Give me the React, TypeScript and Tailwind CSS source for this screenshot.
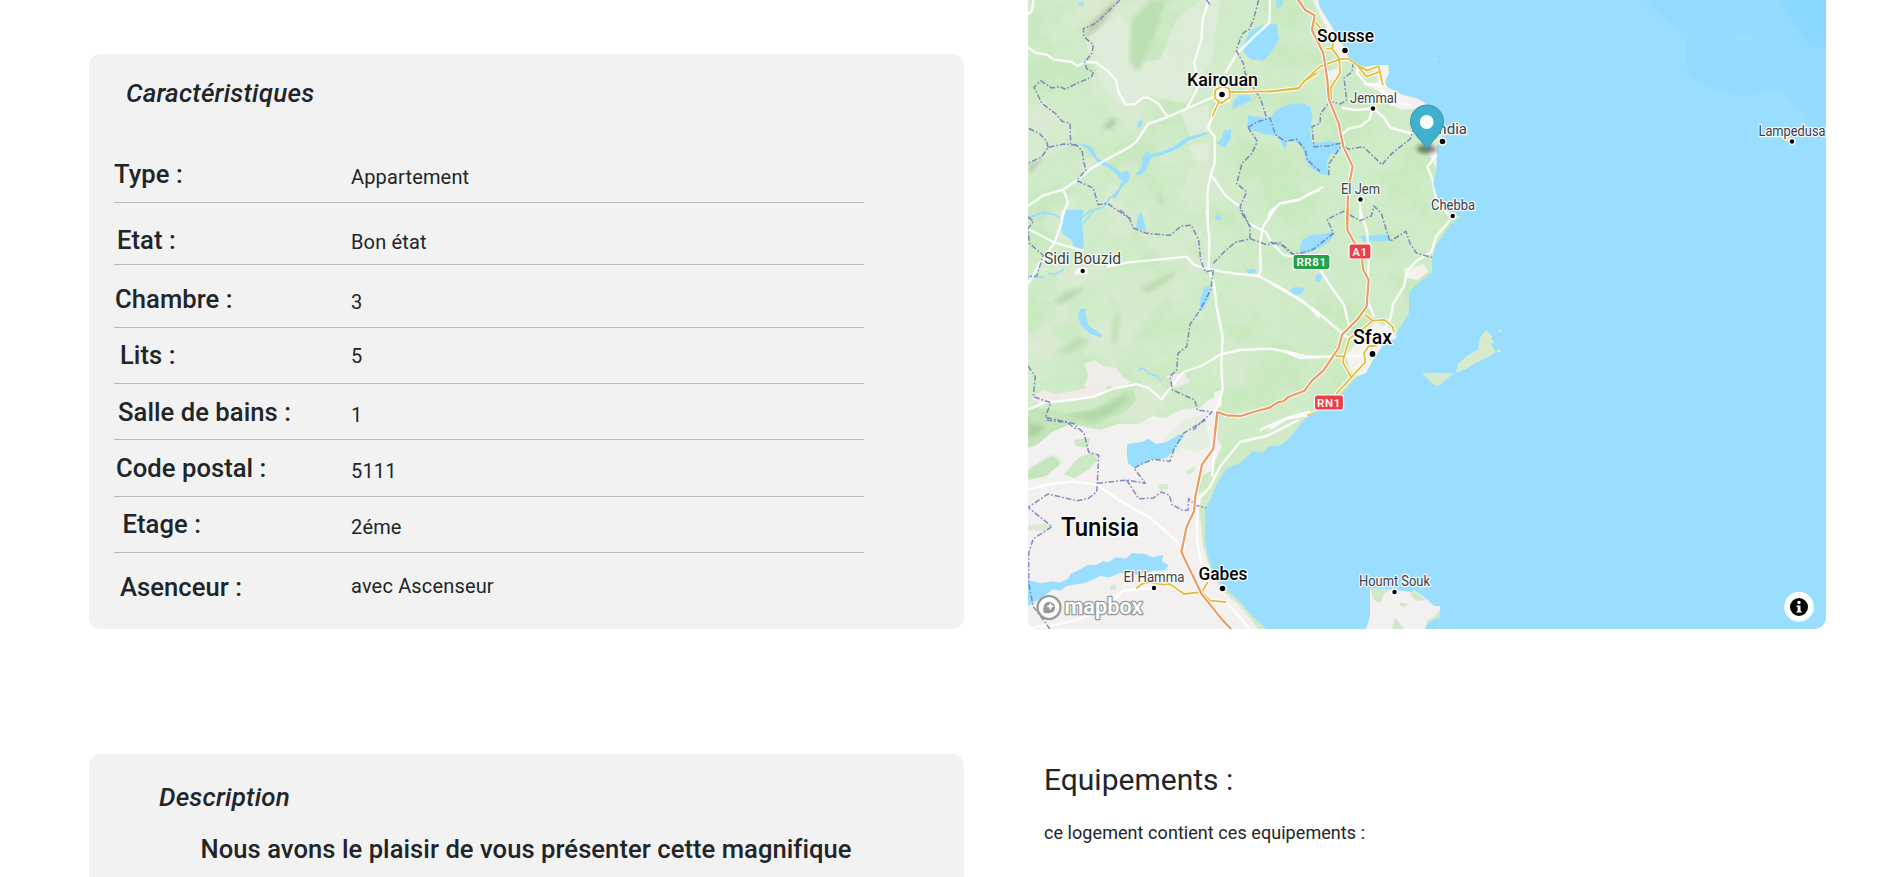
type Row = {
  label: string;
  value: string;
  row: string;
  labelBox: string;
  valueBox: string;
};

const ROWS: Row[] = [
  { label: "Type :", value: "Appartement", row: "h-[53px] border-b", labelBox: "pt-[11px]", valueBox: "pt-[15px]" },
  { label: "Etat :", value: "Bon état", row: "h-[62px] border-b", labelBox: "pt-6 pl-[3px]", valueBox: "pt-[27px]" },
  { label: "Chambre :", value: "3", row: "h-[63px] border-b", labelBox: "pt-[21px] pl-px", valueBox: "pt-[25px]" },
  { label: "Lits :", value: "5", row: "h-14 border-b", labelBox: "pt-3.5 pl-[6px]", valueBox: "pt-4" },
  { label: "Salle de bains :", value: "1", row: "h-14 border-b", labelBox: "pt-[15px] pl-1", valueBox: "pt-[19px]" },
  { label: "Code postal :", value: "5111", row: "h-[57px] border-b", labelBox: "pt-[15px] pl-[2px]", valueBox: "pt-[19px]" },
  { label: "Etage :", value: "2éme", row: "h-14 border-b", labelBox: "pt-3.5 pl-[8.5px]", valueBox: "pt-[18px]" },
  { label: "Asenceur :", value: "avec Ascenseur", row: "h-[76px]", labelBox: "pt-[21px] pl-[6px]", valueBox: "pt-[21px]" },
];

function Characteristics() {
  return (
    <section className="h-[575px] rounded-xl bg-[#f2f2f2] pl-[25px]">
      <h2 className="pt-[26px] pl-3 text-[26px] leading-[26px] font-medium tracking-[0.2px] italic">Caractéristiques</h2>
      <dl className="mt-[44px] w-[750px]">
        {ROWS.map((r) => (
          <div key={r.label} className={`flex items-start border-[#b9babb] ${r.row}`}>
            <dt className="w-[237px] shrink-0 text-[25.6px] leading-[26px] font-medium tracking-[0.05px]">
              <div className={r.labelBox}>{r.label}</div>
            </dt>
            <dd className={`text-xl leading-6 tracking-[0.16px] ${r.valueBox}`}>{r.value}</dd>
          </div>
        ))}
      </dl>
    </section>
  );
}

function Description() {
  return (
    <section className="mt-[125px] h-[140px] rounded-t-xl bg-[#f2f2f2]">
      <h2 className="pt-[30px] pl-[70px] text-[26px] leading-[26px] font-medium tracking-[0.2px] italic">Description</h2>
      <p className="mt-[26px] pl-[111.5px] text-[25.6px] leading-[26px] font-medium tracking-[0.05px]">
        Nous avons le plaisir de vous présenter cette magnifique
      </p>
    </section>
  );
}

const COAST =
  "M1028 0H1318L1320 8L1332 27L1342 43L1348 57L1357 64L1364 67L1377 65L1388 65L1389 72L1385 82L1387 87L1403 95L1417 98L1428 105L1443 117L1444 133L1437 147L1436 173L1433 183L1438 200L1445 210L1461 217L1452 223L1443 235L1435 247L1432 260V273L1417 284L1409 292V313L1397 332L1396 338L1383 345L1373 360L1366 373L1357 377L1348 387L1337 398L1320 410L1307 417L1298 427L1292 435L1285 442L1279 446L1270 446L1262 453L1253 451L1240 463L1227 468L1217 483L1210 500L1205 510V540L1208 557L1213 573L1223 587L1240 602L1253 617L1266 629H1028Z";

type TownProps = { x: number; y: number; w: number; size: number; name: string; bold?: boolean; dot?: [number, number, number] };

const TOWNS: TownProps[] = [
  { x: 1317, y: 41.5, w: 57, size: 19, name: "Sousse", bold: true, dot: [1345, 50.5, 2.8] },
  { x: 1187, y: 86, w: 71, size: 19, name: "Kairouan", bold: true, dot: [1222, 94.5, 2.8] },
  { x: 1350, y: 102.5, w: 47, size: 14.5, name: "Jemmal", dot: [1373, 108.5, 2.2] },
  { x: 1417, y: 134, w: 50, size: 15.5, name: "Mahdia", dot: [1442.5, 141.5, 2.8] },
  { x: 1341, y: 193.5, w: 39, size: 14.5, name: "El Jem", dot: [1360.5, 199.5, 2.2] },
  { x: 1431, y: 210, w: 44, size: 14.5, name: "Chebba", dot: [1452.7, 216, 2.2] },
  { x: 1758.5, y: 135.5, w: 67, size: 14.5, name: "Lampedusa", dot: [1792, 141.5, 2.2] },
  { x: 1044, y: 264, w: 77, size: 17, name: "Sidi Bouzid", dot: [1082.7, 271, 2.2] },
  { x: 1353, y: 344, w: 39, size: 20, name: "Sfax", bold: true, dot: [1372.5, 354, 2.9] },
  { x: 1061, y: 536, w: 78, size: 26, name: "Tunisia", bold: true },
  { x: 1198.5, y: 580, w: 49, size: 19, name: "Gabes", bold: true, dot: [1222.5, 588.5, 2.8] },
  { x: 1123.5, y: 582, w: 61, size: 14.5, name: "El Hamma", dot: [1154, 588, 2.2] },
  { x: 1359, y: 585.5, w: 71, size: 14.5, name: "Houmt Souk", dot: [1394.5, 592, 2.2] },
];

function Town({ x, y, w, size, name, bold, dot }: TownProps) {
  return (
    <g>
      {dot && <circle cx={dot[0]} cy={dot[1]} r={dot[2] + 1.5} fill="#fff" />}
      {dot && <circle cx={dot[0]} cy={dot[1]} r={dot[2]} fill="#000" />}
      <text
        x={x}
        y={y}
        textLength={w}
        lengthAdjust="spacingAndGlyphs"
        fontSize={size}
        fontWeight={bold ? 500 : 400}
        fill={bold ? "#050505" : "#3d4047"}
        stroke="#fff"
        strokeOpacity={0.85}
        strokeWidth={2.6}
        strokeLinejoin="round"
        paintOrder="stroke"
      >
        {name}
      </text>
    </g>
  );
}

function Shield({ x, y, w, color, name }: { x: number; y: number; w: number; color: string; name: string }) {
  return (
    <g>
      <rect x={x} y={y} width={w} height={15} rx={2.5} fill={color} stroke="#fff" strokeWidth={1.2} />
      <text x={x + w / 2} y={y + 11.5} textAnchor="middle" fontSize={11.5} fontWeight={600} letterSpacing={0.6} fill="#fff">
        {name}
      </text>
    </g>
  );
}

/* Frames that place each third-scale tile of map geometry on the sheet. */
const NW = "translate(1020 0) scale(.33333)";
const NE = "translate(1270 0) scale(.33333)";
const W = "translate(1020 210) scale(.33333)";
const E = "translate(1270 210) scale(.33333)";
const SW = "translate(1020 420) scale(.33333)";

function MapDrawing() {
  return (
    <svg viewBox="1028 0 798 629" className="block h-[629px] w-[798px]" fontFamily="Roboto, sans-serif" fill="none">
      <defs>
        <clipPath id="land">
          <path d={COAST} />
        </clipPath>
        <filter id="soft" x="-20%" y="-20%" width="140%" height="140%">
          <feGaussianBlur stdDeviation="2.2" />
        </filter>
        <filter id="cover" x="0" y="0" width="100%" height="100%" colorInterpolationFilters="sRGB">
          <feTurbulence type="fractalNoise" baseFrequency=".019" numOctaves="4" seed="11" />
          <feColorMatrix values="0 0 0 0 .875  0 0 0 0 .925  0 0 0 0 .85  9 0 0 0 -4.3" />
        </filter>
        <filter id="woods" x="0" y="0" width="100%" height="100%" colorInterpolationFilters="sRGB">
          <feTurbulence type="fractalNoise" baseFrequency=".016 .022" numOctaves="4" seed="4" />
          <feColorMatrix values="0 0 0 0 .765  0 0 0 0 .905  0 0 0 0 .725  0 8 0 0 -4.1" />
        </filter>
        <linearGradient id="fadeEast" x1="0" x2="1">
          <stop offset="0" stopColor="#fff" />
          <stop offset=".45" stopColor="#fff" stopOpacity=".8" />
          <stop offset=".8" stopColor="#fff" stopOpacity=".1" />
        </linearGradient>
        <mask id="west" maskUnits="userSpaceOnUse" x="1028" y="0" width="440" height="629">
          <rect x="1028" y="0" width="330" height="629" fill="url(#fadeEast)" />
        </mask>
      </defs>

      <rect x="1028" width="798" height="629" fill="#9adeff" />
      <path d="M1647 0C1654 14 1672 22 1688 34C1686 52 1682 66 1694 79C1710 88 1727 94 1745 96C1758 96 1768 88 1778 90C1790 96 1802 110 1809 125L1826 128V0Z" fill="#93daff" />
      <path d="M1780 0C1790 18 1802 40 1812 45C1818 48 1822 47 1826 47V0Z" fill="#8ad7ff" />
      <ellipse cx="1743" cy="38" rx="10" ry="3" fill="#9adeff" />

      <path d={COAST} fill="#d0ebc8" />
      <g clipPath="url(#land)">
        <rect x="1028" width="440" height="629" filter="url(#woods)" opacity=".55" />
        <g mask="url(#west)">
          <rect x="1028" width="440" height="440" filter="url(#cover)" opacity=".6" />
        </g>
        <path d="M1085 40L1120 14L1132 30L1128 50L1140 62L1160 60L1176 20L1200 0H1220L1212 60L1196 84L1186 104L1150 96L1120 104L1100 80Z" fill="#e0eddc" opacity=".75" />
        <path d="M1180 112L1208 104L1210 130L1190 136ZM1188 146L1210 142L1208 164L1194 160Z" fill="#e0eddc" opacity=".8" />

        {/* uplands */}
        <g filter="url(#soft)">
          <path d="M1132 20L1150 0H1166L1158 26L1150 48L1138 72L1130 62Z" fill="#bcdfb2" />
          <path d="M1084 38L1102 24L1118 2H1112L1090 24Z" fill="#bccbb0" />
          <path d="M1102 128L1112 118L1117 120L1112 129Z" fill="#b0cfa5" />
          <path d="M1052 302L1066 292L1084 287L1080 293L1062 304Z" fill="#b7dbad" />
          <path d="M1140 290L1160 278L1178 270L1170 279L1150 292Z" fill="#b7dbad" />
          <path d="M1120 312L1116 344L1112 344L1114 320Z" fill="#bbddb1" />
          <path d="M1056 352L1078 336L1090 342L1070 354Z" fill="#bfdfb6" />
          <path d="M1160 190L1165 210L1158 200Z" fill="#b9dbb0" />
          <path d="M1028 165L1045 158L1030 174Z" fill="#b9d0ae" />
        </g>

        {/* dry plain */}
        <path
          d="M1028 412L1042 418L1070 424L1100 430L1118 424L1140 424L1152 416L1166 418L1180 410L1200 408L1208 400L1216 398L1213 432L1222 446L1215 462L1204 486L1198 506L1204 540L1208 560L1213 576L1222 590L1240 606L1250 618L1258 629H1028Z"
          fill="#f3f0f0"
        />
        <path d="M1084 364L1094 360L1104 366L1116 368L1124 378L1132 382L1120 388L1108 386L1098 392L1084 386L1088 376Z" fill="#f0ecea" />
        <path d="M1030 398L1044 390L1056 394L1078 390L1102 384L1108 392L1094 398L1064 402L1040 404Z" fill="#eeebe8" />
        <path d="M1166 376L1184 372L1190 382L1176 388Z" fill="#eeebe8" />
        <path d="M1028 406L1044 409L1066 413L1092 409L1110 400L1126 391L1134 390L1136 400L1128 410L1110 418L1092 426L1070 424L1052 432L1038 444L1028 448Z" fill="#c2e5b9" />
        <g filter="url(#soft)">
          <path d="M1066 416L1096 411L1124 396L1130 398L1116 410L1094 421Z" fill="#b1d6a7" />
          <path d="M1028 422L1046 427L1036 436L1028 438Z" fill="#aed0a5" />
          <path d="M1032 470L1052 456L1060 462L1044 474Z" fill="#b6daac" />
        </g>
        <path d="M1028 470L1044 460L1056 458L1060 464L1046 476L1028 480Z" fill="#c5e5bc" />
        <path d="M1064 474L1078 458L1092 452L1098 460L1088 470L1074 478Z" fill="#cce8c4" />
        <path d="M1074 440L1090 438L1088 448L1076 446Z" fill="#cce8c4" />
        <path d="M1028 525L1044 524L1052 527L1044 531L1028 530ZM1110 585L1116 585L1116 590L1110 590ZM1158 484L1168 484L1168 489L1160 490ZM1186 471L1195 466L1194 472L1187 475Z" fill="#d6ebcf" />
        <path d="M1164 438L1184 420L1205 414L1210 446L1196 452L1182 448L1172 458Z" fill="#e4efe0" />
        <path d="M1205 510L1200 512L1203 545L1207 560L1213 575L1223 588L1240 604L1254 618L1258 629H1268L1240 598L1216 570L1212 545Z" fill="#cfe9c6" />
        <path d="M1202 476L1212 470L1208 480L1200 494L1196 488Z" fill="#cfe9c6" />

        {/* built-up areas */}
        <g fill="#f4f1ef">
          <path d="M1318 0L1332 27L1342 43L1350 60L1340 62L1334 54L1332 40L1322 20L1313 0Z" />
          <path d="M1358 64L1390 62L1388 86L1404 95L1418 99L1430 106L1420 108L1402 110L1388 104L1380 92L1362 84L1378 82L1376 72Z" />
          <path d="M1326 72L1338 68L1338 80L1328 82Z" />
          <path d="M1436 140L1438 172L1432 160L1428 152ZM1404 268L1412 268L1424 264L1428 272L1418 280L1406 278Z" />
          <path d="M1352 348L1366 330L1376 322L1394 330L1396 338L1383 345L1373 360L1366 373L1357 376L1350 370L1346 356Z" />
          <path d="M1213 88L1230 88L1230 102L1214 102ZM1076 268L1088 268L1088 274L1074 275Z" />
          <path d="M1214 392L1222 390L1222 406L1212 412Z" />
        </g>

        {/* lakes and reservoirs */}
        <g fill="#9adeff">
          <g transform={NW}>
            <path d="M672 132L690 92L730 74L770 72L778 118L750 162L730 182L690 178L672 156ZM176 6L192 8L192 18L178 16ZM768 0L790 2L782 22L770 24Z" />
            <path d="M636 328L640 304L658 286L690 284L694 300L672 312ZM656 266L672 266L668 276L654 276ZM590 430L606 412L612 392L634 388L632 416L614 444ZM354 364L368 360L364 380L352 384Z" />
            <path d="M684 346L718 350L750 356L766 332L800 314L850 310L870 320L878 350L870 390L878 436L900 446V514L880 508L856 480L850 446L826 424L804 424L794 450L782 424L768 406L740 404L700 392L682 384Z" />
            <path d="M174 430L200 434L222 448L230 472L250 484L280 498L302 518L326 512L328 540L306 562L286 596L272 592L296 566L306 544L292 526L262 500L236 490L216 464L200 446Z" />
            <path d="M346 524L366 500L368 470L382 454L394 462L420 456L460 440L500 412L560 398L564 402L510 420L470 448L430 464L392 472L378 510L362 524Z" />
            <path d="M586 650L602 646L602 660H586ZM354 660L362 640L370 660Z" />
          </g>
          <g transform={NE}>
            <path d="M126 430L180 424L212 430L206 458L180 462L170 490L176 526L150 522L116 496L104 464Z" />
            <path d="M0 70L20 84L24 112L8 138L0 146Z" />
          </g>
          <g transform={W}>
            <path d="M120 20L136 0L182 0H190L186 40L192 100L186 122L164 116L154 90L126 70Z" />
            <path d="M348 58L352 26L362 4L372 34L378 60ZM586 18L600 14L604 26L590 30ZM680 180L706 176L706 190L682 190ZM806 248L824 232L852 234L848 248L816 258Z" />
            <path d="M540 270L552 234L572 226L568 262L550 300L538 304ZM174 320L180 296L196 296L198 320L206 348L226 360L246 376L240 382L210 372L182 346Z" />
          </g>
          <g transform={E}>
            <path d="M88 120L96 90L124 74L160 72L194 64L186 86L160 108L120 126L94 132ZM270 78L300 76L354 72L362 92L330 94L280 94ZM54 244L74 232L102 234L98 248L76 258ZM136 202L146 190L156 196L148 218L138 212Z" />
          </g>
          <g transform={SW}>
            <path d="M322 72L366 66L386 56L408 72L440 66L480 42L494 46L476 70L456 96L442 112L416 120L400 116L366 132L340 142L324 130L320 96Z" />
            <path d="M24 480L60 490L100 484L120 488L144 476L152 462L180 448L206 434L226 436L250 424L268 426L286 412L318 416L336 400L376 402L398 412L430 404L426 424L446 436L434 452L400 452L350 466L330 456L300 458L270 472L240 468L216 480L196 488L140 498L120 512L100 508L60 536L24 558Z" />
          </g>
        </g>
        <g stroke="#9adeff" strokeWidth="5">
          <path transform={NW} d="M30 652L60 640L100 642L124 656M120 656L190 650L210 632L250 622L272 590" />
          <path transform={W} d="M24 26L70 6L100 14M190 40L208 18L220 4M24 200L70 202M84 190L108 192L132 178M352 482L370 474L388 492L408 496L424 512" />
        </g>

        {/* secondary roads */}
        <g stroke="#fff" strokeWidth="7" strokeLinejoin="round" strokeOpacity=".9">
          <path
            transform={NW}
            d="M24 142L46 158L80 164L100 178L156 186L172 198L194 186L228 188L262 212L288 240L296 276L316 314L344 312L370 292L388 294L416 312L442 350M24 618L70 586L130 568L170 542L210 508L250 484L330 440L350 424L384 372L440 352L500 326L584 290M566 0L548 60L544 120L522 190L534 240L530 270L500 326M750 0L748 68L700 112L648 164L616 220M578 348L564 384L584 410L584 490L572 524L562 580L564 660M572 524L620 590L660 620M130 568L144 606L122 660M40 0L36 30L24 44M746 660L750 636L780 610L836 600L870 580L900 570"
          />
          <path
            transform={NE}
            d="M0 640L30 610L90 598L160 560M216 324L260 330L308 326L298 358L272 378L236 386L216 404M308 326L340 350L362 384L430 402M502 462L472 500L488 540L500 600L540 650M270 600L272 660M262 192L262 220L290 252L340 258M330 268L390 310L424 316"
          />
          <path
            transform={W}
            d="M560 0L568 90L566 176L582 220L590 290L608 380L604 470L608 540L590 596L584 604M24 56L104 98L190 122M104 98L124 40L132 0M104 98L60 160L24 222M260 170L320 158L420 148L500 140L524 166L580 180L640 190L716 198L780 232L850 274L900 322M686 40L738 66L756 100L790 134L830 142M762 0L730 48L720 100L722 180L716 198M24 598L80 576L140 572L220 560L280 536L350 522L386 534L424 568L466 516L490 486L544 468L600 434L660 420L750 416L800 424L860 440L900 440M720 660L800 624L870 604"
          />
          <path
            transform={E}
            d="M540 30L498 80L484 126L440 152L410 184L402 230L370 280L360 330L344 356M270 0L290 60L298 130L292 230L296 280L312 320M150 180L190 240L222 284L240 360M0 218L60 252L130 296L200 356L236 386M0 416L40 424L90 444L200 438L290 438M0 656L50 626L110 616"
          />
          <path
            transform={SW}
            d="M24 208L90 192L160 184L230 194L300 242L390 294L440 336L480 376M836 0L740 48L660 66L600 140L570 200L540 234L530 290L532 370L546 440L560 490M584 86L576 170M24 622L90 618L160 602L230 578L270 550L310 512L400 504M616 546L650 580L688 627"
          />
        </g>

        {/* administrative limits */}
        <g stroke="#6f79b8" strokeWidth="4.5" strokeDasharray="17 6 5 6" strokeLinejoin="round" strokeOpacity=".85">
          <path
            transform={NW}
            d="M300 0L262 36L240 58L220 74L190 86L192 110L220 134L216 160L194 186L200 206L220 216L214 232L170 250L136 268L120 260L96 264L62 242L42 262L66 310L108 342L126 364L150 370L152 430L170 436L186 452L192 490L198 510L170 542L220 564L234 614L262 610L300 636L330 656M170 436L132 432L84 442L66 470L24 490M84 442L80 424L60 402L24 384M716 0L700 60L688 88L668 100L648 150L670 190L676 220L704 268L722 298L740 354M684 382L712 366L750 354L766 404L796 424L830 418L856 450L862 480L900 514M684 382L712 424L696 460L666 490L650 550L680 576L660 620L690 680M560 0L570 14"
          />
          <path
            transform={NE}
            d="M250 186L246 216L222 234L230 300L212 312L180 304L152 340L150 370L126 380L132 440L170 438L212 430L236 448L280 440L336 494L366 460L420 418L432 386M176 526L178 490L212 440"
          />
          <path
            transform={W}
            d="M300 0L328 24L340 54L380 70L450 76L484 48L514 46L536 90L542 150L556 186L580 180M580 160L610 128L644 98L690 86L690 50L660 0M690 86L740 104L780 98L830 142M580 180L572 240L540 300L510 344L500 410L474 430L470 480L450 500L458 540L524 570L532 600L576 606L520 660M24 20L40 34L24 56L28 100L70 136L50 198L24 200M24 468L46 500L40 560L92 578L76 622L140 636L172 660"
          />
          <path transform={E} d="M0 96L40 108L66 132L90 130L130 118L190 70L172 28L220 4L270 32L304 18L312 -12L334 10L346 50L360 94L408 64L420 100L440 130L486 142" />
          <path
            transform={SW}
            d="M80 0L160 10L192 40L206 96L236 106L232 190L230 216L204 236L170 242L84 222L24 262L96 320L40 356L26 400L26 490L40 560L90 627M232 190L320 180L376 190L342 144L366 132L400 118L450 124L460 92L490 40L556 0M320 180L356 236L400 234L424 216L448 226L456 254L490 272L504 270L506 236L526 256L560 264"
          />
        </g>

        {/* trunk roads */}
        <g strokeLinejoin="round" strokeLinecap="round">
          {[
            { c: "#fff", w: 11 },
            { c: "#e2bd3e", w: 5.5 },
          ].map((s) => (
            <g key={s.c} stroke={s.c} strokeWidth={s.w}>
              <path transform={NW} d="M628 276L760 274L836 266L852 244L890 220M596 306L578 348M584 290L586 270L606 258L628 266L630 292L604 310L586 296Z" />
              <path
                transform={NE}
                d="M0 274L86 264L108 238L150 200L208 178L236 176L262 196L292 212L326 198L338 254M262 196L290 230L326 216M208 178L210 220L182 264L184 300M170 146L186 146L190 130L134 64M186 146L208 176M88 0L96 8"
              />
              <path
                transform={E}
                d="M286 314L308 332L344 330L368 350L372 366M308 332L280 356L238 386L228 420L218 456L244 502M196 438L222 440M318 408L296 408L282 430L286 456L244 502L200 550M140 606L114 616"
              />
              <path transform={SW} d="M350 504L366 492L388 486L430 494L450 492L492 522L546 516L562 488M546 516L570 542L616 546" />
            </g>
          ))}
          {[
            { c: "#fff", w: 12 },
            { c: "#eb9a60", w: 6.5 },
          ].map((s) => (
            <g key={s.c} stroke={s.c} strokeWidth={s.w}>
              <path transform={NE} d="M84 0L106 30L134 46L126 90L160 160L172 240L176 296L206 370L220 440L248 500L234 570L232 670" />
              <path transform={E} d="M232 0L232 60L260 110L276 150L280 180L296 210L290 290L264 326L216 374L206 414L160 482L126 512L104 542L56 560L40 574L26 576L0 592" />
              <path transform={W} d="M752 592L700 606L662 618L620 616L592 606L586 660" />
              <path transform={SW} d="M592 -22L580 86L546 134L526 230L522 274L500 320L484 396L514 458L546 524L604 596L634 628" />
            </g>
          ))}
        </g>
      </g>

      {/* islands */}
      <path d="M1422 373L1431 373L1454 373L1438 386L1433 384ZM1456 373L1458 364L1468 355L1478 350L1480 338L1486 330L1492 336L1492 346L1496 352L1488 357L1476 363L1466 369Z" fill="#d6ebcb" />
      <path d="M1498 330h3v2h-3zM1497 350h4v2h-4zM1432 59l4 -1v2zM1491 340h3v3h-3z" fill="#d6ebcb" />
      <path d="M1778 136L1786 136L1796 142L1788 142Z" fill="#d6ebcb" />
      <path d="M1370 588L1394 590L1412 592L1414 590L1428 600L1434 606L1440 606V617L1428 622L1425 629H1366L1370 616Z" fill="#f3f0f0" />
      <path d="M1370 588L1390 590L1384 594L1380 603L1374 600ZM1410 594L1414 591L1426 600L1416 601ZM1400 603L1408 603L1406 607L1400 606ZM1392 629L1395 618L1404 629ZM1426 621L1434 617L1440 610V617L1428 623Z" fill="#cfe8c6" />

      {TOWNS.map((t) => (
        <Town key={t.name} {...t} />
      ))}
      <Shield x={1349} y={244} w={22} color="#ee3e45" name="A1" />
      <Shield x={1293} y={254.5} w={37} color="#1fa24a" name="RR81" />
      <Shield x={1314.5} y={395} w={29} color="#ee3e45" name="RN1" />

      {/* marker */}
      <ellipse cx="1426.5" cy="149" rx="10" ry="4.5" fill="#000" opacity=".45" filter="url(#soft)" />
      <path d="M1427 149C1422.500 140.500 1410.500 133 1410.500 121.500A16.500 16.500 0 0 1 1443.500 121.500C1443.500 133 1431.500 140.500 1427 149Z" fill="#3fb1ce" stroke="#3494ad" strokeWidth="1" />
      <circle cx="1426.700" cy="122" r="6.900" fill="#fff" />

      {/* wordmark */}
      <circle cx="1049" cy="607.500" r="11.500" fill="#fff" fillOpacity=".92" stroke="#999" strokeWidth="2.200" />
      <path d="M1043.500 612.800C1042.600 608 1043.600 604.600 1045.900 602.700A6 6 0 0 1 1054.100 611C1051.800 613.200 1048.200 613.800 1043.500 612.800Z" fill="#999" />
      <path d="M1050.300 602.400L1051.500 605.100L1054.200 606.300L1051.500 607.500L1050.300 610.200L1049.100 607.500L1046.400 606.300L1049.100 605.100Z" fill="#fff" />
      <text x="1064.500" y="614" textLength="78" lengthAdjust="spacingAndGlyphs" fontSize="21.500" fontWeight="600" fill="#fff" stroke="#999" strokeWidth="2.600" strokeLinejoin="round" paintOrder="stroke">
        mapbox
      </text>

      {/* attribution button */}
      <circle cx="1799" cy="607" r="15" fill="#fff" fillOpacity=".8" />
      <circle cx="1799" cy="606" r="14" fill="#fff" />
      <circle cx="1799" cy="607" r="9" fill="#000" />
      <circle cx="1799" cy="602.500" r="1.700" fill="#fff" />
      <path d="M1796.600 605.500H1800.500V611H1801.500V612.500H1796.600V611H1797.600V607H1796.600Z" fill="#fff" />
    </svg>
  );
}

export default function App() {
  return (
    <main className="flex h-[877px] w-[1897px] overflow-hidden bg-white font-[Roboto,sans-serif] text-[#212529]">
      <div className="ml-[89px] w-[875px] pt-[54px]">
        <Characteristics />
        <Description />
      </div>
      <div className="ml-16 w-[798px]">
        <div className="overflow-hidden rounded-b-xl">
          <MapDrawing />
        </div>
        <div className="pt-[133px] pl-4">
          <h3 className="text-[30px] leading-9">Equipements :</h3>
          <p className="mt-6 text-lg leading-[22px] tracking-[0.06px]">ce logement contient ces equipements :</p>
        </div>
      </div>
    </main>
  );
}
